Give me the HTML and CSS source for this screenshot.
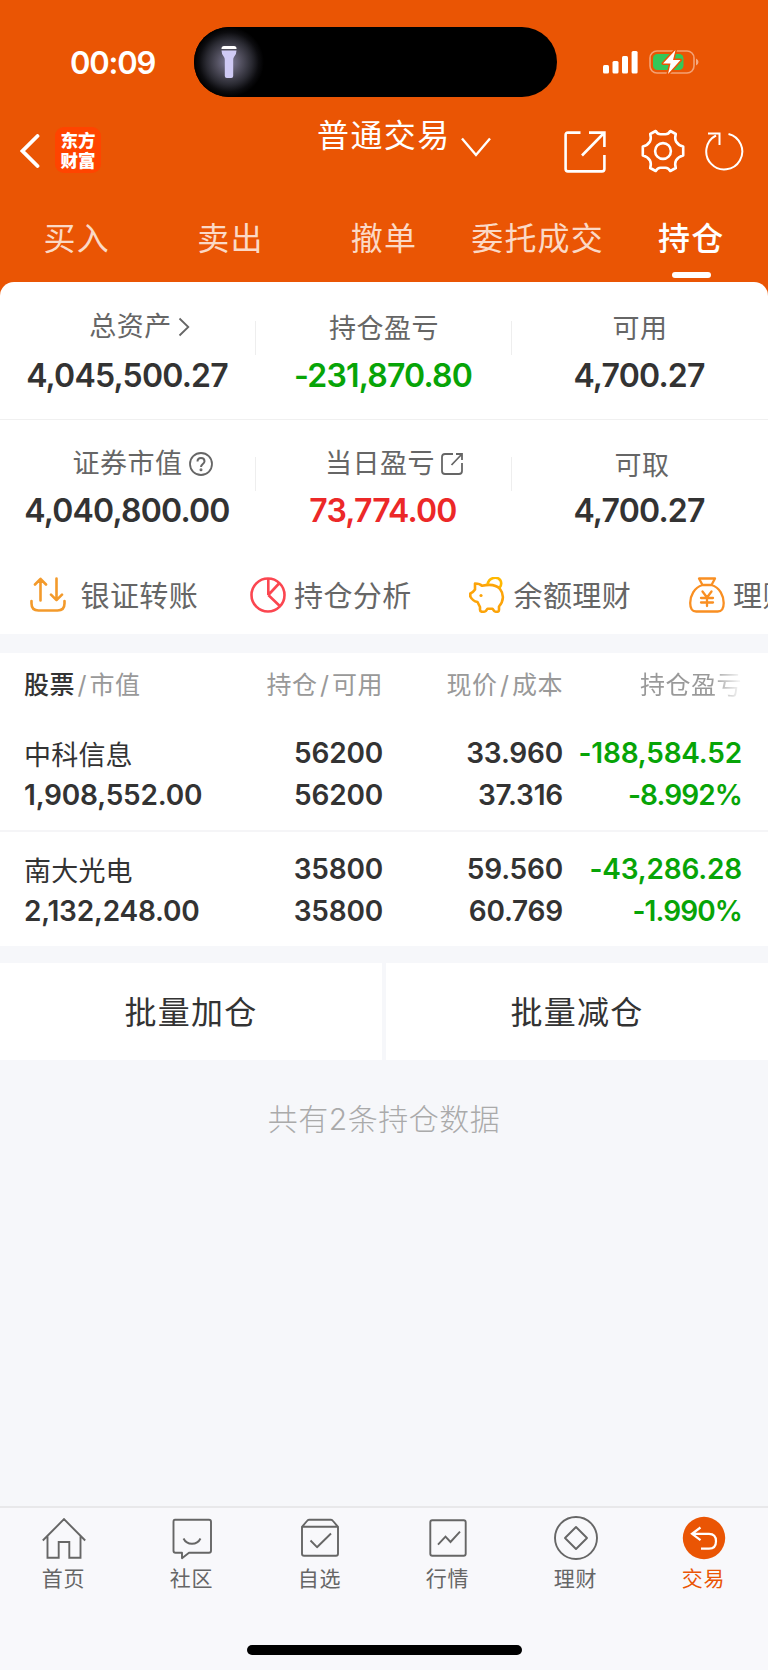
FILE: index.html
```html
<!DOCTYPE html>
<html lang="zh-CN">
<head>
  <meta charset="UTF-8" />
  <meta name="viewport" content="width=device-width, initial-scale=1.0"/>
  <title>普通交易 - 持仓</title>
  <link rel="stylesheet" href="styles.css">
</head>
<body>
  <header class="top">
    <div class="status-bar">
      <span class="time">00:09</span>
      <div class="island">
        <div class="torch">
          <svg width="16" height="34" viewBox="0 0 16 34">
            <path d="M.5 3.500Q.5 1 3 1h10q2.500 0 2.500 2.500V4H.5z" fill="#fff"/>
            <path d="M.5 5.500h15q0 4-2.500 6.500-.8 1-.8 3v16q0 2-2 2H5.800q-2 0-2-2V15q0-2-.8-3Q.5 9.500.5 5.500z" fill="#cfcaf4"/>
          </svg>
        </div>
      </div>
      <svg class="signal" width="35" height="23" viewBox="0 0 35 23" fill="#fff">
        <rect x="0" y="14" width="6" height="8.500" rx="1.500"/>
        <rect x="9.500" y="10" width="6" height="12.500" rx="1.500"/>
        <rect x="19" y="5" width="6" height="17.500" rx="1.500"/>
        <rect x="28.600" y="0" width="6" height="22.500" rx="1.500"/>
      </svg>
      <svg class="battery" width="50" height="26" viewBox="0 0 50 26">
        <rect x="1" y="2" width="44" height="22" rx="7" fill="none" stroke="#fff" stroke-opacity=".45" stroke-width="1.600"/>
        <path d="M47 9.500q2.500 1 2.500 3.500T47 16.500z" fill="#fff" fill-opacity=".5"/>
        <rect x="4" y="5" width="30.500" height="16" rx="4.500" fill="#34c759"/>
        <path d="M26.500 1 14 14.500h7.500L19 25l12.500-14h-7.500z" fill="#fff" stroke="#ea5504" stroke-width="3" stroke-linejoin="round" paint-order="stroke"/>
      </svg>
    </div>

    <div class="title-bar">
      <svg class="back" width="20" height="34" viewBox="0 0 20 34" fill="none" stroke="#fff" stroke-width="3.800" stroke-linecap="round" stroke-linejoin="miter">
        <path d="M17.500 2 2.500 17l15 15"/>
      </svg>
      <div class="logo"><span>东方</span><span>财富</span></div>
      <div class="title">普通交易</div>
      <svg class="down" width="30" height="20" viewBox="0 0 30 20" fill="none" stroke="#fff" stroke-width="2.400">
        <path d="M1 1.500 15 18 29 1.500"/>
      </svg>
      <svg class="share" width="42" height="42" viewBox="0 0 42 42" fill="none" stroke="#fff" stroke-width="2.600">
        <path d="M16.500 1.600H4q-2.400 0-2.400 2.400v34q0 2.400 2.400 2.400h34q2.400 0 2.400-2.400V24"/>
        <path d="M25 1.600h15.400V16M40 2 18 24.500"/>
      </svg>
      <svg class="gear" width="44" height="44" viewBox="0 0 44 44" fill="none" stroke="#fff" stroke-width="2.600" stroke-linejoin="round">
        <path d="M14.700 2Q16.500 5.200 19.500 5.200h5Q27.500 5.200 29.300 2l5.500 3Q33.500 9.500 35 12.500q2.500 4 7.200 5v9q-4.700 1-7.200 5-1.500 3-.2 7.500l-5.500 3q-1.800-3.200-4.800-3.200h-5q-3 0-4.800 3.200l-5.500-3q1.300-4.500-.2-7.500-2.500-4-7.200-5v-9q4.700-1 7.200-5Q10.500 9.500 9.200 5z"/>
        <circle cx="22" cy="22" r="7.900"/>
      </svg>
      <svg class="refresh" width="40" height="40" viewBox="0 0 40 40" fill="none" stroke="#fff" stroke-width="2">
        <path d="M24.500 3A18 18 0 1 1 12 4.500"/>
        <path d="M4 2.500h11.500V14"/>
      </svg>
    </div>

    <nav class="tabs">
      <a>买入</a>
      <a>卖出</a>
      <a>撤单</a>
      <a>委托成交</a>
      <a class="active">持仓</a>
    </nav>
  </header>

  <section class="assets">
    <div class="asset-row">
      <div class="asset">
        <div class="label label-total">总资产<svg width="12" height="20" viewBox="0 0 12 20" fill="none" stroke="#666" stroke-width="1.800"><path d="M1.500 1.500 10.300 10l-8.800 8.500"/></svg></div>
        <div class="value">4,045,500.27</div>
      </div>
      <div class="asset">
        <div class="label low">持仓盈亏</div>
        <div class="value green">-231,870.80</div>
      </div>
      <div class="asset">
        <div class="label low">可用</div>
        <div class="value">4,700.27</div>
      </div>
    </div>
    <div class="asset-row second">
      <div class="asset">
        <div class="label label-market">证券市值<svg width="24" height="24" viewBox="0 0 24 24" fill="none" stroke="#666" stroke-width="1.800"><circle cx="12" cy="12" r="11"/><path d="M8.500 9.500Q8.500 6 12 6t3.500 3.300c0 2.700-3.500 2.700-3.500 5.700" stroke-width="2"/><circle cx="12" cy="17.800" r=".6"/></svg></div>
        <div class="value">4,040,800.00</div>
      </div>
      <div class="asset">
        <div class="label label-today">当日盈亏<svg width="22" height="22" viewBox="0 0 22 22" fill="none" stroke="#666" stroke-width="1.800"><path d="M12 1H4Q1 1 1 4v14q0 3 3 3h14q3 0 3-3v-8"/><path d="M15 1h6v6M21 1 10.500 12"/></svg></div>
        <div class="value red">73,774.00</div>
      </div>
      <div class="asset">
        <div class="label low label-draw">可取</div>
        <div class="value">4,700.27</div>
      </div>
    </div>

    <div class="shortcuts">
      <div class="shortcut first">
        <svg width="36" height="36" viewBox="0 0 36 36" fill="none" stroke="#f39a2b" stroke-width="2.600" stroke-linecap="round" stroke-linejoin="round">
          <path d="M1.500 24v2.500q0 7 7 7h19q7 0 7-7V24"/>
          <path d="M10.500 23.500V2M5 7.500l5.500-5.700L16 7.500M26.500 1.500V23M21 17.700l5.500 5.500 5.500-5.500"/>
        </svg>
        <span>银证转账</span>
      </div>
      <div class="shortcut">
        <svg width="36" height="36" viewBox="0 0 36 36" fill="none" stroke="#fb4650" stroke-width="2.600">
          <circle cx="18" cy="18" r="16.500"/>
          <path d="M18.300 1v17M18.300 18 29.500 6M18.300 18l12 11.500"/>
        </svg>
        <span>持仓分析</span>
      </div>
      <div class="shortcut">
        <svg width="36" height="36" viewBox="0 0 36 36" fill="none" stroke="#fca40a" stroke-width="2.600" stroke-linejoin="round">
          <path d="M6 6.500q5 0 7 2.300C21 7 27 7.500 31 12c4 5 4 12-1 17.500v3.500q0 1.800-2 1.800t-3-1l-1.500-2h-5l-1.500 2q-1 1-3.500 1t-2.500-2V30L8.500 25Q3.500 24 1.300 19.500v-3Q4 15.500 6 12.500z"/>
          <path d="M18.500 7.500C20 0 28.500-1 31.500 3.500q1.800 4-1 7.500" stroke="#ffb800"/>
          <circle cx="12" cy="18.500" r="1.600" fill="#fca40a" stroke="none"/>
        </svg>
        <span>余额理财</span>
      </div>
      <div class="shortcut">
        <svg width="36" height="36" viewBox="0 0 36 36" fill="none" stroke="#f98f22" stroke-width="2.300" stroke-linejoin="round" stroke-linecap="round">
          <path d="M10 1.500h16l-3.500 6.500h-9zM13.500 8C5 10.500 1.200 19 1.200 26q0 8.500 6 8.500h21.500q6 0 6-8.500C34.700 19 31 10.500 22.500 8"/>
          <path d="m13.500 14.500 4.500 6 4.500-6M18 20.500V29M12 21h12M12 25.500h12"/>
        </svg>
        <span>理财</span>
      </div>
    </div>
  </section>

  <section class="holdings">
    <div class="row head">
      <div class="name"><b>股票</b><i>/</i>市值</div>
      <div class="qty">持仓<i>/</i>可用</div>
      <div class="price">现价<i>/</i>成本</div>
      <div class="profit fade">持仓盈亏</div>
    </div>
    <div class="row stock">
      <div class="name"><span class="stock-name">中科信息</span><span>1,908,552.00</span></div>
      <div class="qty"><span>56200</span><span>56200</span></div>
      <div class="price"><span>33.960</span><span>37.316</span></div>
      <div class="profit green"><span>-188,584.52</span><span class="percent">-8.992%</span></div>
    </div>
    <div class="row stock">
      <div class="name"><span class="stock-name">南大光电</span><span>2,132,248.00</span></div>
      <div class="qty"><span>35800</span><span>35800</span></div>
      <div class="price"><span>59.560</span><span>60.769</span></div>
      <div class="profit green"><span>-43,286.28</span><span class="percent">-1.990%</span></div>
    </div>
  </section>

  <div class="batch">
    <div class="batch-button">批量加仓</div>
    <div class="batch-button">批量减仓</div>
  </div>

  <p class="total">共有2条持仓数据</p>

  <footer class="bottom">
    <nav class="menu">
      <a>
        <svg width="44" height="44" viewBox="0 0 44 44" fill="none" stroke="#666" stroke-width="1.900">
          <path d="M.8 24.500 22 3.200l21.200 21.300M5.500 20.500v21.300h11.200V26h10.600v15.800h11.200V20.500"/>
        </svg>
        <span>首页</span>
      </a>
      <a>
        <svg width="44" height="44" viewBox="0 0 44 44" fill="none" stroke="#666" stroke-width="1.900" stroke-linejoin="round">
          <path d="M5 3.800h34q2 0 2 2v29q0 2-2 2H19l-7 5.400V36.800H5.500q-2 0-2-2v-29q0-2 1.500-2z"/>
          <path d="M13.500 22.500c3.500 7 13.500 7 17 0"/>
        </svg>
        <span>社区</span>
      </a>
      <a>
        <svg width="44" height="44" viewBox="0 0 44 44" fill="none" stroke="#666" stroke-width="1.900" stroke-linejoin="round">
          <path d="M4 10.800h36v27q0 2-2 2H6q-2 0-2-2zL9 5q.8-1.200 2-1.200h22q1.200 0 2 1.200l5 5.800"/>
          <path d="m12.500 24.500 6.500 6.700 14-13.700"/>
        </svg>
        <span>自选</span>
      </a>
      <a>
        <svg width="44" height="44" viewBox="0 0 44 44" fill="none" stroke="#666" stroke-width="1.900">
          <rect x="4.300" y="4.300" width="35.400" height="35.400" rx="2"/>
          <path d="m12 28.700 7.500-8 5 5.300 9.500-10.300"/>
        </svg>
        <span>行情</span>
      </a>
      <a>
        <svg width="44" height="44" viewBox="0 0 44 44" fill="none" stroke="#666" stroke-width="1.900" stroke-linejoin="round">
          <circle cx="22" cy="22" r="21"/>
          <path d="M22 11 33 22 22 33 11 22z"/>
        </svg>
        <span>理财</span>
      </a>
      <a class="current">
        <svg width="44" height="44" viewBox="0 0 44 44" fill="none" stroke="#fff" stroke-width="2.200">
          <circle cx="22" cy="22" r="21.200" fill="#ea5504" stroke="none"/>
          <path d="M18.500 11.500 10 17.800l8.500 6.400M10.500 17.800H27q7 0 7 7.400t-7 7.400h-8"/>
        </svg>
        <span>交易</span>
      </a>
    </nav>
    <div class="home-bar"></div>
  </footer>
</body>
</html>
```
FILE: styles.css
```css
* {
  box-sizing: border-box;
}

body {
  margin: 0;
  width: 768px;
  height: 1670px;
  overflow: hidden;
  display: flex;
  flex-direction: column;
  background: #f6f7fa;
  font-family: Inter, "Noto Sans CJK SC", sans-serif;
  color: #333;
}

svg {
  flex: none;
  display: block;
}

.top {
  height: 297px;
  background: #ea5504;
  color: #fff;
}

.status-bar {
  height: 97px;
  padding-top: 27px;
  display: flex;
  align-items: center;
}

.time {
  width: 124px;
  margin-left: 70px;
  font-size: 31px;
  font-weight: 600;
  letter-spacing: -1.200px;
}

.island {
  width: 363px;
  height: 70px;
  border-radius: 35px;
  background: #000;
}

.torch {
  width: 70px;
  height: 70px;
  display: flex;
  align-items: center;
  justify-content: center;
  background: radial-gradient(closest-side, #807d9a 0, #52505f 35%, #2a2a32 65%, #0c0c0f 85%, #000 100%);
  border-radius: 35px;
}

.signal {
  margin-left: 46px;
}

.battery {
  margin-left: 11px;
}

.title-bar {
  height: 103px;
  padding: 0 24px 0 20px;
  display: flex;
  align-items: center;
}

.back {
  margin-top: 5px;
}

.logo {
  width: 46px;
  height: 46px;
  margin: 3px 0 0 15px;
  padding-top: 4px;
  border-radius: 9px;
  background: #ff4400;
  font-size: 17.500px;
  font-weight: 900;
  line-height: 19.500px;
  text-align: center;
  display: flex;
  flex-direction: column;
}

.title {
  width: 133px;
  margin: -25px 0 0 216px;
  font-size: 32px;
  line-height: 44px;
  letter-spacing: 1.400px;
  white-space: nowrap;
}

.down {
  margin: -3px 0 0 11px;
}

.share {
  margin: 7px 0 0 73px;
}

.gear {
  margin: 5px 0 0 35px;
}

.refresh {
  margin: 5px 0 0 19px;
}

.tabs {
  height: 82px;
  display: grid;
  grid-template-columns: repeat(5, 1fr);
}

.tabs a {
  padding-top: 16px;
  font-size: 32px;
  line-height: 46px;
  letter-spacing: 1.200px;
  text-align: center;
  color: #fbd9c6;
}

.tabs .active {
  color: #fff;
  font-weight: 500;
}

.tabs .active::after {
  content: "";
  display: block;
  width: 39px;
  height: 6px;
  margin: 10px auto 0;
  border-radius: 3px;
  background: #fff;
}

.assets {
  height: 352px;
  margin-top: -15px;
  background: #fff;
  border-radius: 14px 14px 0 0;
}

.asset-row {
  height: 138px;
  padding-top: 24px;
  display: grid;
  grid-template-columns: repeat(3, 1fr);
  border-bottom: 1px solid #f0f0f0;
}

.asset-row.second {
  height: 136px;
  border-bottom: none;
}

.asset {
  text-align: center;
  background: linear-gradient(#eee, #eee) no-repeat right 15px / 1px 34px;
}

.second .asset {
  background-position: right 13px;
}

.asset:last-child {
  background: none;
}

.label {
  height: 40px;
  display: flex;
  align-items: center;
  justify-content: center;
  font-size: 27px;
  line-height: 38px;
  letter-spacing: 0.500px;
  color: #666;
}

.label svg {
  margin-left: 6px;
}

.low {
  padding-top: 6px;
}

.label-total {
  padding: 1px 0 0 23px;
}

.label-market {
  padding-left: 29px;
}

.label-today {
  padding-left: 20px;
}

.label-draw {
  padding: 3px 0 0 4px;
}

.value {
  margin-top: 9px;
  padding-right: 2px;
  font-size: 32px;
  font-weight: 600;
  line-height: 42px;
  letter-spacing: -0.800px;
}

.second .value {
  margin-top: 6px;
}

.green {
  color: #07a407;
}

.red {
  color: #ec2828;
}

.shortcuts {
  height: 78px;
  padding-left: 30px;
  display: flex;
  overflow: hidden;
}

.shortcut {
  flex: none;
  width: 219.500px;
  height: 78px;
  display: flex;
  align-items: center;
  font-size: 29px;
  letter-spacing: 0.400px;
  color: #666;
}

.shortcut span {
  margin: -3px 0 0 8.500px;
}

.shortcut.first span {
  margin-left: 14.500px;
}

.holdings {
  margin-top: 19px;
  background: #fff;
}

.row {
  padding: 0 26px 0 24px;
  display: grid;
  grid-template-columns: 188px 171px 180px 179px;
}

.head {
  height: 61px;
  font-size: 25px;
  line-height: 64px;
  letter-spacing: 0.500px;
  color: #999;
}

.head b {
  font-weight: 500;
  color: #333;
}

.head i {
  padding: 0 2.500px;
  font-style: normal;
}

.qty,
.price,
.profit {
  text-align: right;
}

.fade {
  background: linear-gradient(to right, #999 148px, #fff 180px);
  -webkit-background-clip: text;
  background-clip: text;
  color: transparent;
}

.stock {
  height: 118px;
  padding-top: 18px;
  font-size: 28px;
  font-weight: 600;
  line-height: 42px;
  letter-spacing: -0.200px;
  border-bottom: 2px solid #f5f5f7;
}

.stock + .stock {
  height: 114px;
  padding-top: 16px;
  border-bottom: none;
}

.stock span {
  display: block;
  height: 42px;
  white-space: nowrap;
}

.stock .stock-name {
  font-size: 27px;
  font-weight: 400;
  line-height: 48px;
  letter-spacing: 0.200px;
}

.stock .percent {
  letter-spacing: -0.900px;
}

.batch {
  height: 97px;
  margin-top: 17px;
  display: grid;
  grid-template-columns: 1fr 1fr;
  gap: 4px;
}

.batch-button {
  height: 97px;
  padding-top: 3px;
  background: #fff;
  font-size: 32px;
  line-height: 94px;
  letter-spacing: 1.300px;
  text-align: center;
}

.total {
  margin: 37px 0 0;
  font-size: 30px;
  font-weight: 300;
  line-height: 44px;
  letter-spacing: 0.500px;
  text-align: center;
  color: #aaa;
}

.bottom {
  height: 164px;
  margin-top: auto;
  border-top: 2px solid #e8e8ea;
  background: #f8f8fb;
}

.menu {
  height: 137px;
  padding-top: 8px;
  display: grid;
  grid-template-columns: repeat(6, 1fr);
}

.menu a {
  display: flex;
  flex-direction: column;
  align-items: center;
  color: #666;
}

.menu span {
  margin: 4px 1px 0 0;
  font-size: 21px;
  line-height: 30px;
  letter-spacing: 0.800px;
}

.menu .current {
  color: #ea5504;
}

.home-bar {
  width: 275px;
  height: 10px;
  margin: 0 auto;
  border-radius: 5px;
  background: #000;
}
```
